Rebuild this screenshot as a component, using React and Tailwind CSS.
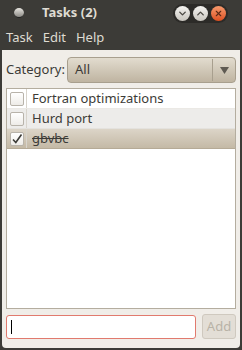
import { ChevronDown, ChevronUp, X } from 'lucide-react'

const tasks = [
  { name: 'Fortran optimizations', done: false },
  { name: 'Hurd port', done: false },
  { name: 'gbvbc', done: true },
]

function Check({ checked }) {
  return (
    <div className="w-[14px] h-[14px] rounded-[2px] border border-[#b8b3aa] bg-gradient-to-b from-white to-[#eeece8] flex items-center justify-center">
      {checked && (
        <svg width="12" height="12" viewBox="0 0 12 12">
          <path d="M2 6.5 L4.8 9.5 L10.5 1.5" fill="none" stroke="#3c3b37" strokeWidth="1.6" />
        </svg>
      )}
    </div>
  )
}

export default function App() {
  return (
    <div className="w-[242px] h-[350px] bg-[#3c3b37] flex flex-col" style={{ fontFamily: '"Noto Sans", "DejaVu Sans", sans-serif' }}>
      {/* Title bar */}
      <div className="h-[26px] flex items-center pl-[14px] pr-[14px] shrink-0">
        <div className="w-[10px] h-[10px] rounded-full bg-gradient-to-b from-[#e8e6e1] to-[#8c8a85] border-b border-[#222]" />
        <span className="ml-[18px] text-[13px] font-bold text-[#dfdbd2]">Tasks (2)</span>
        <div className="ml-auto flex items-center gap-[3px] bg-[#2c2b28] rounded-full px-[2px] py-[2px]">
          <div className="w-[15px] h-[15px] rounded-full bg-gradient-to-b from-[#f4f3f0] to-[#c9c6bf] flex items-center justify-center">
            <ChevronDown size={11} strokeWidth={3} color="#4a4843" />
          </div>
          <div className="w-[15px] h-[15px] rounded-full bg-gradient-to-b from-[#f4f3f0] to-[#c9c6bf] flex items-center justify-center">
            <ChevronUp size={11} strokeWidth={3} color="#4a4843" />
          </div>
          <div className="w-[15px] h-[15px] rounded-full bg-gradient-to-b from-[#f69a6c] to-[#dd4e1e] flex items-center justify-center">
            <X size={9} strokeWidth={3} color="#5a2a18" />
          </div>
        </div>
      </div>

      {/* Menu bar */}
      <div className="h-[24px] flex items-center gap-[10px] px-[6px] text-[13px] text-[#dfdbd2] shrink-0">
        <span>Task</span>
        <span>Edit</span>
        <span>Help</span>
      </div>

      {/* Body */}
      <div className="flex-1 mx-[2px] mb-[2px] bg-[#f0ede8] rounded-b-[4px] flex flex-col px-[4px] pt-[7px] pb-[9px]">
        <div className="flex items-center h-[26px]">
          <span className="text-[13px] text-[#3c3b37] w-[61px]">Category:</span>
          <div className="flex-1 h-[26px] rounded-[4px] border border-[#a89f8e] bg-gradient-to-b from-[#e2dccf] to-[#bfb4a1] flex items-center">
            <span className="flex-1 pl-[7px] text-[13px] text-[#3c3b37]">All</span>
            <div className="w-px h-[22px] bg-[#a89f8e]" />
            <div className="w-[22px] flex items-center justify-center">
              <svg width="9" height="7" viewBox="0 0 9 7"><path d="M0 0 H9 L4.5 7 Z" fill="#5f5a52" /></svg>
            </div>
          </div>
        </div>

        <div className="mt-[5px] flex-1 bg-white border border-[#b4ad9f] flex flex-col">
          {tasks.map((t, i) => (
            <div
              key={t.name}
              className={`h-[20px] flex items-center border-b ${
                t.done
                  ? 'bg-gradient-to-b from-[#dcd5c8] to-[#c4b9a6] border-[#b5aa96]'
                  : i % 2 === 1
                  ? 'bg-[#edecea] border-[#e4e2de]'
                  : 'bg-white border-[#ebe9e5]'
              }`}
            >
              <div className="w-[20px] h-full flex items-center justify-center border-r border-[#d8d4cc]">
                <Check checked={t.done} />
              </div>
              <span className={`pl-[5px] text-[13px] text-[#3c3b37] ${t.done ? 'line-through' : ''}`}>{t.name}</span>
            </div>
          ))}
        </div>

        <div className="mt-[5px] flex items-center gap-[6px]">
          <div className="flex-1 h-[24px] bg-white border border-[#e17a6e] rounded-[3px] flex items-center pl-[4px]">
            <div className="w-px h-[14px] bg-black" />
          </div>
          <div className="w-[34px] h-[25px] rounded-[3px] border border-[#cfc9bf] bg-[#e3ded6] flex items-center justify-center text-[13px] text-[#b8b2a6]">
            Add
          </div>
        </div>
      </div>
    </div>
  )
}
